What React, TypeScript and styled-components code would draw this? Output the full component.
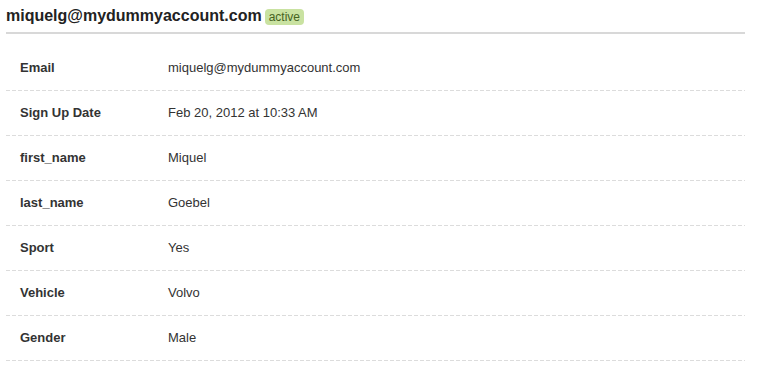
import React from "react";
import styled, { createGlobalStyle } from "styled-components";

const Global = createGlobalStyle`
  html, body { margin: 0; padding: 0; background: #fff; }
  body { font-family: "Liberation Sans", Arial, Helvetica, sans-serif; color: #333; }
`;

const Page = styled.div`
  width: 739px;
  padding-left: 6px;
`;

const Header = styled.div`
  display: flex;
  align-items: center;
  gap: 3px;
  height: 32px;
  border-bottom: 2px solid #d8d8d8;
`;

const Title = styled.h1`
  margin: 0;
  font-size: 16px;
  font-weight: bold;
  color: #222;
  line-height: 30px;
`;

const Badge = styled.span`
  display: inline-block;
  background: #c9e2a1;
  color: #46631f;
  font-size: 12px;
  line-height: 16px;
  padding: 0 4px;
  border-radius: 4px;
  margin-top: 1px;
`;

const Table = styled.div`
  margin-top: 12px;
`;

const Row = styled.div`
  display: grid;
  grid-template-columns: 148px 1fr;
  align-items: center;
  height: 44px;
  padding-left: 14px;
  padding-bottom: 1px;
  background-image: repeating-linear-gradient(to right, #dcdcdc 0 4px, transparent 4px 6px);
  background-size: 100% 1px;
  background-repeat: no-repeat;
  background-position: left bottom;
`;

const Label = styled.div`
  font-size: 13px;
  font-weight: bold;
  color: #333;
  margin-top: -2px;
`;

const Value = styled.div`
  font-size: 13px;
  color: #333;
  margin-top: -2px;
`;

const rows: [string, string][] = [
  ["Email", "miquelg@mydummyaccount.com"],
  ["Sign Up Date", "Feb 20, 2012 at 10:33 AM"],
  ["first_name", "Miquel"],
  ["last_name", "Goebel"],
  ["Sport", "Yes"],
  ["Vehicle", "Volvo"],
  ["Gender", "Male"],
];

export default function App() {
  return (
    <>
      <Global />
      <Page>
        <Header>
          <Title>miquelg@mydummyaccount.com</Title>
          <Badge>active</Badge>
        </Header>
        <Table>
          {rows.map(([k, v]) => (
            <Row key={k}>
              <Label>{k}</Label>
              <Value>{v}</Value>
            </Row>
          ))}
        </Table>
      </Page>
    </>
  );
}
